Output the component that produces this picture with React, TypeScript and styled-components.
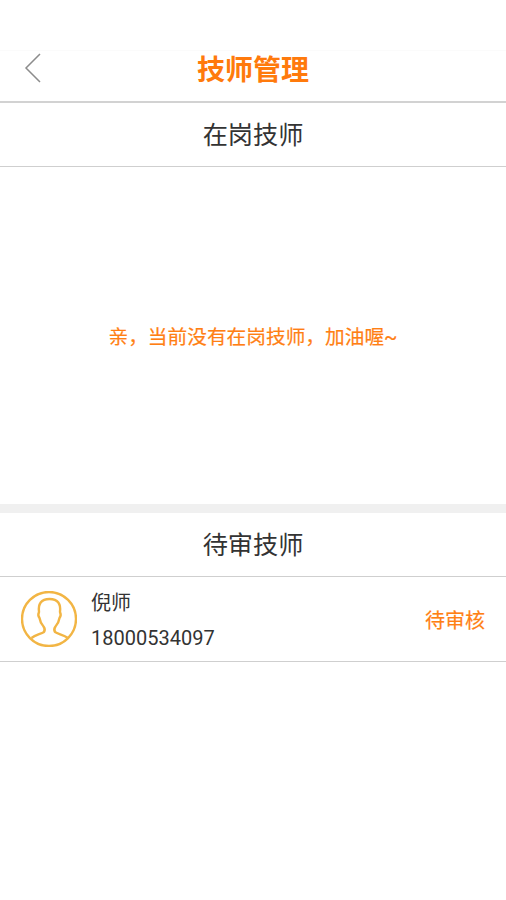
import React from "react";
import styled, { createGlobalStyle } from "styled-components";

const GlobalStyle = createGlobalStyle`
  html, body {
    margin: 0;
    padding: 0;
    background: #ffffff;
    font-family: "Roboto", "Noto Sans CJK SC", sans-serif;
  }
`;

const Page = styled.div`
  width: 506px;
  height: 900px;
  overflow: hidden;
  background: #ffffff;
  display: flex;
  flex-direction: column;
`;

const StatusSpace = styled.div`
  height: 51px;
  border-bottom: 1px solid #fbfbfb;
  box-sizing: border-box;
`;

const Header = styled.header`
  height: 50px;
  display: flex;
  align-items: center;
  justify-content: center;
  position: relative;
  border-bottom: 2px solid #d2d2d2;
`;

const BackButton = styled.svg`
  position: absolute;
  left: 24px;
  top: 2px;
`;

const Title = styled.h1`
  margin: 0 0 10px;
  font-size: 28px;
  line-height: 36px;
  font-weight: 700;
  color: #ff7a0c;
`;

const SectionTitle = styled.div`
  height: 64px;
  box-sizing: border-box;
  padding-bottom: 3px;
  display: flex;
  align-items: center;
  justify-content: center;
  font-size: 25.2px;
  color: #333333;
  border-bottom: 1px solid #cfcfcf;
`;

const EmptyPanel = styled.div`
  height: 337px;
  display: flex;
  align-items: center;
  justify-content: center;
  font-size: 19.7px;
  color: #ff7f14;
  -webkit-text-stroke: 0.2px #ff7f14;
`;

const Divider = styled.div`
  height: 9px;
  background: #f0f0f0;
`;

const TechRow = styled.div`
  height: 84px;
  display: flex;
  align-items: center;
  padding: 0 21px;
  border-bottom: 1px solid #cfcfcf;
`;

const TechInfo = styled.div`
  flex: 1;
  margin-left: 14px;
  padding-top: 2px;
  display: flex;
  flex-direction: column;
  gap: 9px;
  color: #333333;
`;

const TechName = styled.div`
  font-size: 20px;
  line-height: 26px;
`;

const TechPhone = styled.div`
  font-size: 20px;
  line-height: 26px;
`;

const Status = styled.div`
  font-size: 20px;
  color: #ff7f14;
  -webkit-text-stroke: 0.2px #ff7f14;
`;

const Avatar = () => (
  <svg width="56" height="56" viewBox="0 0 56 56" fill="none" stroke="#f2b544" strokeWidth="2.4">
    <circle cx="28" cy="28" r="27" />
    <path d="M10.5 47 C14 44 20 43 23 41 C24 39.5 24 37.5 22.5 35.5 C20 33 19 30 18.5 27 C17 25 17 23 18 21 C17 13 20 8 28.5 8 C37 8 40 13 39 21 C40 23 40 25 38.5 27 C38 30 37 33 34.5 35.5 C33 37.5 33 39.5 34 41 C37 43 43 44 47 47" />
  </svg>
);

export default function App() {
  return (
    <Page>
      <GlobalStyle />
      <StatusSpace />
      <Header>
        <BackButton width="18" height="30" viewBox="0 0 18 30" fill="none" stroke="#8c8c8c" strokeWidth="1.5">
          <path d="M16 1 L2 15 L16 29" />
        </BackButton>
        <Title>技师管理</Title>
      </Header>
      <SectionTitle>在岗技师</SectionTitle>
      <EmptyPanel>亲，当前没有在岗技师，加油喔~</EmptyPanel>
      <Divider />
      <SectionTitle>待审技师</SectionTitle>
      <TechRow>
        <Avatar />
        <TechInfo>
          <TechName>倪师</TechName>
          <TechPhone>18000534097</TechPhone>
        </TechInfo>
        <Status>待审核</Status>
      </TechRow>
    </Page>
  );
}
